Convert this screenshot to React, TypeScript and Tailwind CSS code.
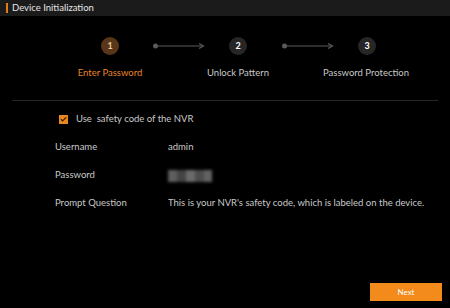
import { Check } from "lucide-react";

const font = { fontFamily: 'Lato, "Noto Sans", "Liberation Sans", sans-serif' };

const Connector = ({ className }: { className: string }) => (
  <svg className={className} width="52" height="8" viewBox="0 0 52 8">
    <circle cx="2.5" cy="4" r="2.5" fill="#5a5a5a" />
    <line x1="3" y1="4" x2="50" y2="4" stroke="#5a5a5a" strokeWidth="1.2" />
    <path d="M46 1.5 L50.5 4 L46 6.5" fill="none" stroke="#5a5a5a" strokeWidth="1.2" />
  </svg>
);

const Row = ({ label, children }: { label: string; children: React.ReactNode }) => (
  <div className="flex h-7 items-center">
    <div className="w-[113px] pl-[55px] whitespace-nowrap box-content">{label}</div>
    <div className="whitespace-nowrap">{children}</div>
  </div>
);

export default function App() {
  return (
    <div className="flex h-[308px] w-[450px] flex-col bg-black text-[9.5px] text-[#c9c9c9]" style={font}>
      <div className="flex h-4 items-center bg-[#1b1b1b] pl-[6px]">
        <div className="h-[10px] w-[2px] bg-[#e07a1c]" />
        <span className="ml-[4px] text-[#e6e6e6]">Device Initialization</span>
      </div>

      <div className="mt-[21px] flex items-center pl-[101px]">
        <div className="flex h-[18px] w-[18px] items-center justify-center rounded-full bg-[#5a3618] text-[9px] font-bold text-[#e9c9a0]">1</div>
        <Connector className="ml-[34px]" />
        <div className="ml-[24px] flex h-[18px] w-[18px] items-center justify-center rounded-full bg-[#262626] text-[9px] font-bold text-white">2</div>
        <Connector className="ml-[35px]" />
        <div className="ml-[24px] flex h-[18px] w-[18px] items-center justify-center rounded-full bg-[#262626] text-[9px] font-bold text-white">3</div>
      </div>

      <div className="mt-[11px] flex pl-[46px]">
        <div className="w-[128px] text-center text-[#e8852a]">Enter Password</div>
        <div className="w-[128px] text-center">Unlock Pattern</div>
        <div className="w-[128px] text-center">Password Protection</div>
      </div>

      <div className="mx-[12px] mt-[20px] h-px bg-[#262626]" />

      <div className="mt-[11px] flex items-center pl-[59px]">
        <div className="flex h-[9px] w-[9px] items-center justify-center bg-[#e8861f]">
          <Check size={7} strokeWidth={4} color="#3a1e00" />
        </div>
        <span className="ml-[8px] whitespace-pre">Use  safety code of the NVR</span>
      </div>

      <div className="mt-[7px] flex flex-col">
        <Row label="Username">admin</Row>
        <Row label="Password">
          <div className="flex h-[13px] w-[44px] items-center blur-[1.5px]">
            <div className="h-[12px] w-[9px] bg-[#5e5e5e]" />
            <div className="h-[12px] w-[9px] bg-[#444444]" />
            <div className="h-[12px] w-[9px] bg-[#6a6a6a]" />
            <div className="h-[12px] w-[9px] bg-[#4c4c4c]" />
            <div className="h-[12px] w-[8px] bg-[#626262]" />
          </div>
        </Row>
        <Row label="Prompt Question">This is your NVR's safety code, which is labeled on the device.</Row>
      </div>

      <div className="mt-auto mb-[7px] flex justify-end pr-[8px]">
        <button className="h-[18px] w-[72px] bg-[#f28a1c] text-[8px] text-white">Next</button>
      </div>
    </div>
  );
}
